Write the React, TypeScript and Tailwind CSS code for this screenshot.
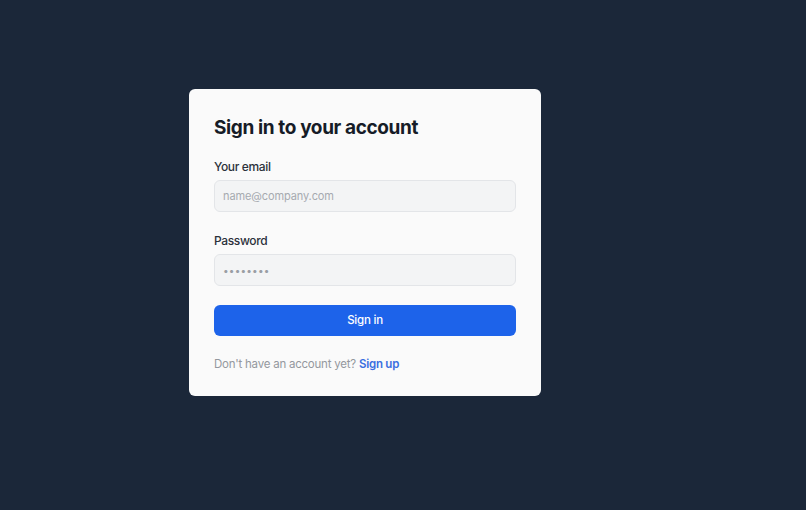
export default function App() {
	return (
		<div
			className="min-h-[510px] w-full bg-[#1b2739] pl-[189px] pt-[89px]"
			style={{ fontFamily: "Inter, 'Noto Sans', sans-serif" }}
		>
			<div className="w-[352px] rounded-md bg-[#fafafa] px-[25px] pt-[25px] pb-[22px]">
				<h1 className="text-[19px] leading-7 font-bold tracking-[-0.02em] text-[#161c27]">
					Sign in to your account
				</h1>

				<form className="mt-[15px]" onSubmit={(e) => e.preventDefault()}>
					<label className="block text-[12px] leading-5 font-medium tracking-[-0.03em] text-[#2b313a]">
						Your email
					</label>
					<input
						type="email"
						placeholder="name@company.com"
						className="mt-[3px] block h-[32px] w-full rounded-md border border-[#e3e5e8] bg-[#f3f4f5] px-2 text-[11px] tracking-[-0.01em] text-[#111827] placeholder:text-[#a6aab0] outline-none"
					/>

					<label className="mt-[19px] block text-[12px] leading-5 font-medium tracking-[-0.03em] text-[#2b313a]">
						Password
					</label>
					<input
						type="password"
						defaultValue="••••••••"
						className="mt-[3px] block h-[32px] w-full rounded-md border border-[#e3e5e8] bg-[#f3f4f5] px-2 text-[10px] tracking-[0.02em] text-[#9a9ea4] outline-none"
					/>

					<button
						type="submit"
						className="mt-[19px] block h-[31px] w-full rounded-md bg-[#1d63ea] text-[11.5px] font-medium tracking-[-0.02em] text-white"
					>
						Sign in
					</button>

					<p className="mt-[18px] text-[11.5px] leading-5 tracking-[-0.02em] text-[#94989e]">
						Don't have an account yet?{" "}
						<a href="#" className="font-semibold text-[#3b6fe0]">
							Sign up
						</a>
					</p>
				</form>
			</div>
		</div>
	);
}
